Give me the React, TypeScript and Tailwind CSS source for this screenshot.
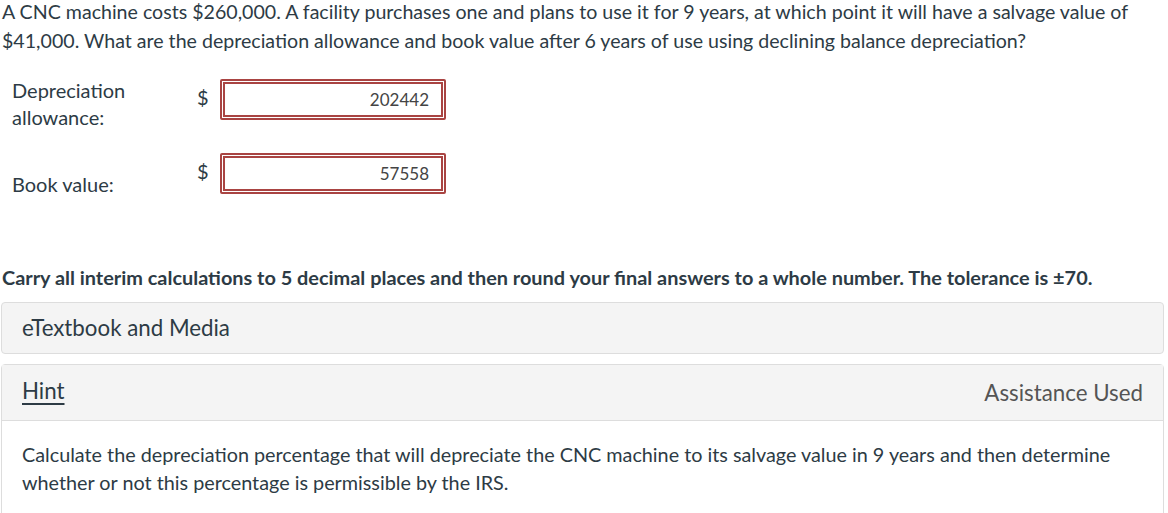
import React from 'react';

const AnswerBox: React.FC<{ value: string }> = ({ value }) => (
  <div className="border-2 border-[#a94442] p-px rounded-[2px]">
    <div className="w-[220px] h-[35px] border-2 border-[#a94442] bg-white flex items-center justify-end pr-[12px] text-[17px] text-[#444]">
      {value}
    </div>
  </div>
);

export default function App() {
  return (
    <div
      className="w-[1168px] h-[513px] overflow-hidden bg-white text-[#2d3b45]"
      style={{ fontFamily: 'Lato, "Open Sans", sans-serif' }}
    >
      <p className="pl-[2px] mt-[-3px] text-[19.6px] leading-[29px]">
        A CNC machine costs $260,000. A facility purchases one and plans to use it for 9 years, at which point it will have a salvage value of $41,000. What are the depreciation allowance and book value after 6 years of use using declining balance depreciation?
      </p>

      <div className="pl-[12px] mt-[22px] text-[20px]">
        {/* row 1 */}
        <div className="flex items-start">
          <div className="w-[185px] leading-[27px]">
            Depreciation
            <br />
            allowance:
          </div>
          <div className="w-[23px] leading-[27px] mt-[7px]">$</div>
          <div className="mt-[2px]">
            <AnswerBox value="202442" />
          </div>
        </div>

        {/* row 2 */}
        <div className="flex items-start mt-[22px]">
          <div className="w-[185px] leading-[27px] mt-[18px]">Book value:</div>
          <div className="w-[23px] leading-[27px] mt-[5px]">$</div>
          <AnswerBox value="57558" />
        </div>
      </div>

      <p className="pl-[2px] mt-[65px] text-[19.9px] leading-[29px] font-bold">
        Carry all interim calculations to 5 decimal places and then round your final answers to a whole number. The tolerance is ±70.
      </p>

      <div className="ml-[1px] w-[1163px] mt-[10px] h-[52px] rounded-[4px] border border-[#ddd] bg-[#f4f4f4] flex items-center px-[20px] text-[22.3px]">
        eTextbook and Media
      </div>

      <div className="ml-[1px] w-[1163px] mt-[10px] rounded-t-[4px] border border-[#ddd]">
        <div className="h-[56px] bg-[#f4f4f4] border-b border-[#ddd] flex items-center justify-between px-[20px] text-[22.3px]">
          <span className="underline underline-offset-[4px] decoration-[2px] mt-[-4px]">Hint</span>
          <span className="text-[#555] mt-[1px]">Assistance Used</span>
        </div>
        <div className="px-[20px] pt-[19px] pb-[20px] text-[19.8px] leading-[28px]">
          Calculate the depreciation percentage that will depreciate the CNC machine to its salvage value in 9 years and then determine
          <br />
          whether or not this percentage is permissible by the IRS.
        </div>
      </div>
    </div>
  );
}
